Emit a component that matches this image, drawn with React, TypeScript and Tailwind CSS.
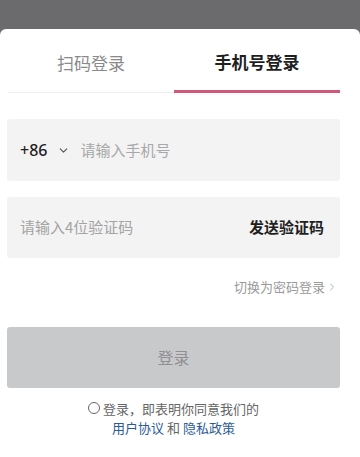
import { ChevronDown, ChevronRight } from 'lucide-react';

const font = { fontFamily: '"Noto Sans CJK SC", "Noto Sans", sans-serif' };

export default function App() {
  return (
    <div className="flex h-[457px] w-[360px] flex-col bg-[#6b6b6e]" style={font}>
      <div className="h-[29px] shrink-0" />
      <div className="flex flex-1 flex-col rounded-t-[6px] bg-white">
        {/* tabs */}
        <div className="mx-[8px] mr-[20px] flex h-[64px] items-stretch">
          <div className="flex flex-1 flex-col">
            <div className="flex flex-1 items-center justify-center pt-[4px] text-[17px] text-[#8a8a8a]">
              扫码登录
            </div>
            <div className="h-px bg-[#ededed]" />
          </div>
          <div className="flex flex-1 flex-col">
            <div className="flex flex-1 items-center justify-center pt-[4px] text-[17px] font-bold text-[#1f1f1f]">
              手机号登录
            </div>
            <div className="h-[3px] bg-[#d4567a]" />
          </div>
        </div>

        {/* inputs */}
        <div className="mx-[7px] mr-[20px] mt-[26px] flex flex-col gap-[16px]">
          <div className="flex h-[62px] items-center rounded-[3px] bg-[#f3f3f3] pl-[13px]">
            <span className="text-[16px] font-medium text-[#1f1f1f]" style={{ fontFamily: '"Noto Sans", sans-serif' }}>
              +86
            </span>
            <ChevronDown className="ml-[10px] h-[13px] w-[13px] text-[#555]" strokeWidth={2} />
            <span className="ml-[10px] text-[15px] text-[#a8a8a8]">请输入手机号</span>
          </div>
          <div className="flex h-[61px] items-center justify-between rounded-[3px] bg-[#f3f3f3] pl-[13px] pr-[16px]">
            <span className="text-[15px] text-[#a3a3a3]">请输入4位验证码</span>
            <span className="text-[15px] font-bold text-[#1f1f1f]">发送验证码</span>
          </div>
        </div>

        <div className="mr-[22px] mt-[19px] flex items-center justify-end text-[13px] text-[#9a9a9a]">
          切换为密码登录
          <ChevronRight className="ml-[1px] h-[12px] w-[12px]" strokeWidth={1.5} />
        </div>

        <button className="mx-[7px] mr-[20px] mt-[30px] flex h-[61px] items-center justify-center rounded-[3px] bg-[#c8c9cb] text-[16px] text-[#909093]">
          登录
        </button>

        <div className="mt-[11px] flex flex-col items-center pr-[13px] text-[13px] leading-[19px]">
          <div className="flex items-center text-[#666]">
            <span className="mr-[3px] inline-block h-[12px] w-[12px] rounded-full border border-[#666]" />
            登录，即表明你同意我们的
          </div>
          <div className="text-[#666]">
            <span className="text-[#2c5b98]">用户协议</span> 和 <span className="text-[#2c5b98]">隐私政策</span>
          </div>
        </div>
      </div>
    </div>
  );
}
